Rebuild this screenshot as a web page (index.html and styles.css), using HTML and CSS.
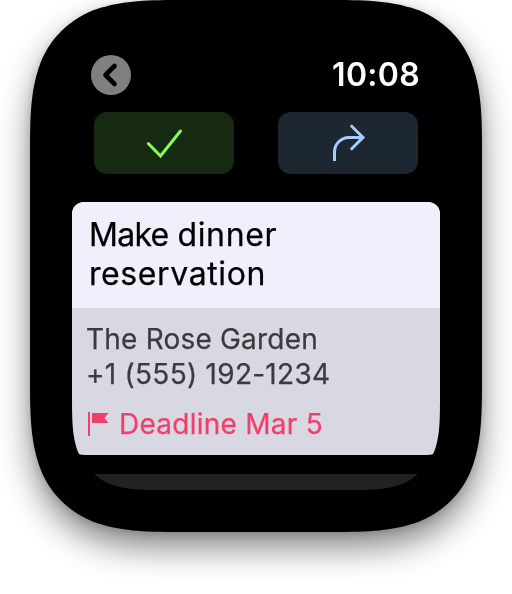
FILE: index.html
```html
<!DOCTYPE html>
<html lang="en">
<head>
<meta charset="utf-8">
<title>Reminder</title>
<link rel="stylesheet" href="styles.css">
</head>
<body>
<div class="watch-shadow">
  <main class="watch">
    <div class="screen">
      <header class="status">
        <button class="back" aria-label="Back">
          <svg width="40" height="40" viewBox="0 0 40 40"><path d="M23.500 11 14.500 20l9 9"/></svg>
        </button>
        <time class="clock">10:08</time>
      </header>
      <div class="actions">
        <button class="action done" aria-label="Complete">
          <svg width="48" height="48" viewBox="0 0 48 48"><path d="M8.300 24.500 20.500 37 40.500 12"/></svg>
        </button>
        <button class="action move" aria-label="Move">
          <svg width="48" height="48" viewBox="0 0 48 48"><path class="tail" d="M10.500 42V33A14.500 14.500 0 0 1 25 18.400H39"/><path d="M27.700 7.200 39 18.400 27.700 29.700"/></svg>
        </button>
      </div>
      <article class="card">
        <h1 class="title"><span class="tight">Make</span> <span class="loose">dinner</span><br><span class="loose">reservation</span></h1>
        <div class="details">
          <p class="notes"><span class="place">The Rose Garden</span><br><span class="phone">+1 (555) 192-1234</span></p>
          <p class="deadline">
            <svg width="22" height="24" viewBox="0 0 22 24"><path d="M0 0h2v24H0zM4 1h16.500l-4 5 4 5H4z"/></svg>
            <span>Deadline Mar 5</span>
          </p>
        </div>
      </article>
      <div class="next"></div>
    </div>
  </main>
</div>
</body>
</html>
```
FILE: styles.css
```css
* { box-sizing: border-box; }
body {
  margin: 0;
  height: 594px;
  overflow: hidden;
  background: #fff;
  font-family: Inter, "Liberation Sans", sans-serif;
}
.watch-shadow {
  width: 452px;
  height: 532px;
  margin: 0 auto;
  filter: drop-shadow(0 2px 4px rgba(0, 0, 0, .15)) drop-shadow(0 16px 16px rgba(0, 0, 0, .46));
}
.watch {
  height: 532px;
  padding: 42px;
  background: #000;
  clip-path: path("M0 150C0 110 1.5 91 8.5 68.5C17.5 40 40 17.5 68.5 8.5C91 1.5 110 0 150 0H302C342 0 361 1.5 383.5 8.5C412 17.5 434.500 40 443.5 68.5C450.500 91 452 110 452 150V382C452 422 450.500 441 443.5 463.5C434.500 492 412 514.500 383.5 523.500C361 530.500 342 532 302 532H150C110 532 91 530.500 68.5 523.500C40 514.500 17.5 492 8.5 463.5C1.5 441 0 422 0 382Z");
}
.screen {
  height: 448px;
  overflow: hidden;
  clip-path: path("M0 0H368V348.600C368 377.2 368 391.5 363.2 406.900C357 423.8 343.8 437 326.900 443.2C311.500 448 297.2 448 268.600 448H99.400C70.800 448 56.5 448 41.1 443.2C24.2 437 11 423.8 4.8 406.900C0 391.5 0 377.2 0 348.600Z");
}
.status {
  display: flex;
  align-items: center;
  justify-content: space-between;
  height: 66px;
  padding: 0 20px 0 19px;
}
button { padding: 0; border: 0; display: flex; align-items: center; justify-content: center; }
.back { width: 40px; height: 40px; border-radius: 50%; background: #808080; }
.back path { fill: none; stroke: #000; stroke-width: 4.600; stroke-linecap: round; stroke-linejoin: round; }
.clock { color: #fff; font-size: 32px; font-weight: 600; line-height: 40px; letter-spacing: .3px; }
.actions { display: flex; justify-content: space-between; padding: 0 22px; margin-top: 4px; }
.action { width: 140px; height: 62px; border-radius: 13px; }
.action path { fill: none; stroke-width: 3; stroke-linecap: round; }
.action .tail { stroke-linecap: butt; }
.done { background: #162a12; }
.done path { stroke: #85fc56; }
.move { background: #1c2731; }
.move path { stroke: #a5cdff; }
.card {
  height: 253px;
  margin-top: 28px;
  border-radius: 12px;
  overflow: hidden;
  background: #d8d8e2;
  -webkit-text-stroke: .25px currentColor;
}
.title {
  height: 106px;
  margin: 0;
  padding: 13px 17px 0;
  background: #f0effc;
  color: #000;
  font-size: 32px;
  font-weight: 400;
  line-height: 39px;
}
.tight { letter-spacing: -.7px; }
.loose { letter-spacing: .6px; }
.details { padding: 14px 14px 0; font-size: 28px; line-height: 35px; }
.notes { margin: 0; color: #3b3b3e; }
.place { letter-spacing: .2px; }
.phone { letter-spacing: .27px; }
.deadline { display: flex; align-items: center; gap: 9px; margin: 15px 0 0 2px; color: #f23e6b; letter-spacing: .25px; }
.deadline svg { margin-bottom: 2px; }
.deadline path { fill: #f23e6b; }
.next { height: 16px; margin-top: 19px; background: #222; }
```
